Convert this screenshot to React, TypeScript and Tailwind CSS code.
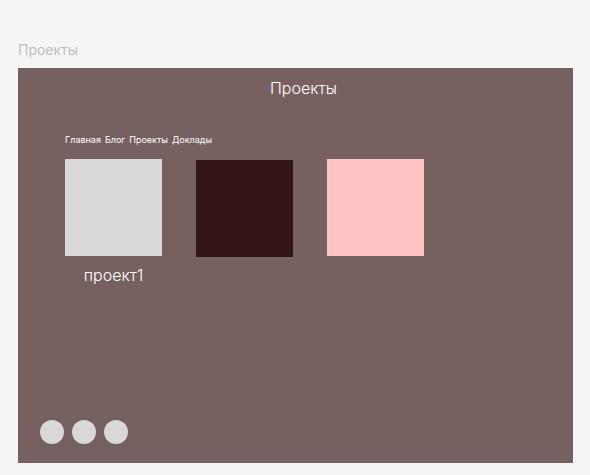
const tiles = [
  { color: "bg-[#d9d9d9]", title: "проект1" },
  { color: "bg-[#331517] mt-px", title: "" },
  { color: "bg-[#ffc2c2]", title: "" },
];

const links = ["Главная", "Блог", "Проекты", "Доклады"];

export default function App() {
  return (
    <div className="flex min-h-screen flex-col bg-[#f5f5f5] pt-10 pr-[17px] pb-3 pl-[18px] font-['Inter',sans-serif]">
      <div className="mb-2 text-sm leading-5 text-[#bdbdbd]">Проекты</div>
      <main className="flex grow flex-col bg-[#776160] text-white">
        <h1 className="pt-2 pl-4 text-center text-base leading-6 font-light">Проекты</h1>
        <nav className="mt-8 flex gap-1 px-[47px] text-[9px] leading-4">
          {links.map((link) => (
            <a key={link} href="#">{link}</a>
          ))}
        </nav>
        <section className="mt-[11px] flex gap-[34px] px-[47px]">
          {tiles.map((tile) => (
            <figure key={tile.color} className="w-[97px]">
              <div className={`h-[97px] ${tile.color}`} />
              {tile.title && (
                <figcaption className="mt-[7px] text-center text-base leading-6 font-light">{tile.title}</figcaption>
              )}
            </figure>
          ))}
        </section>
        <footer className="mt-auto flex gap-2 px-[22px] pb-[19px]">
          <span className="size-6 rounded-full bg-[#d9d9d9]" />
          <span className="size-6 rounded-full bg-[#d9d9d9]" />
          <span className="size-6 rounded-full bg-[#d9d9d9]" />
        </footer>
      </main>
    </div>
  );
}
